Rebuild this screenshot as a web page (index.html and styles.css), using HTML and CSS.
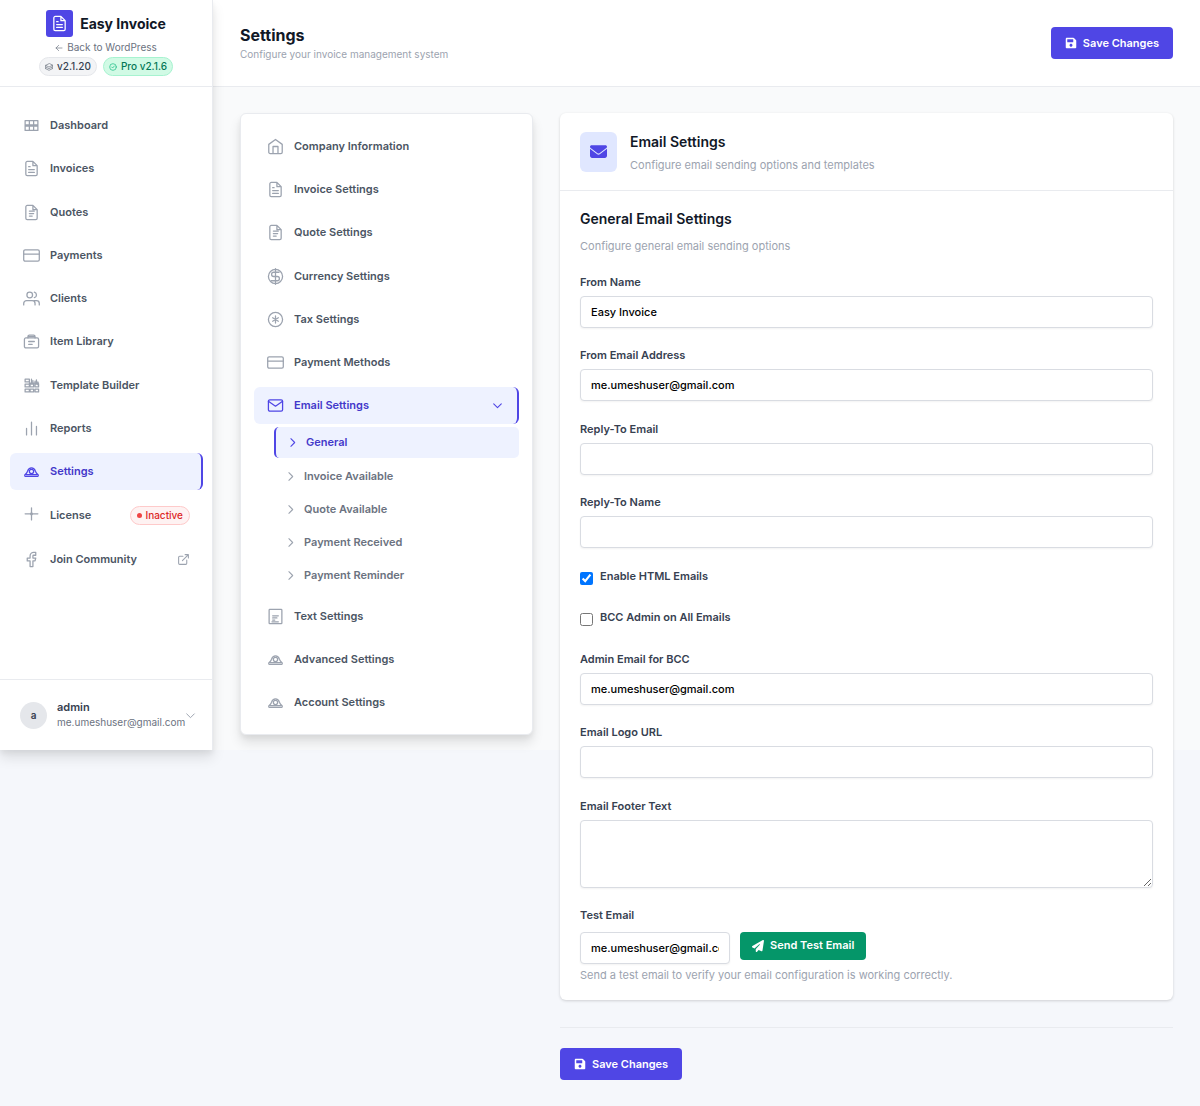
FILE: index.html
```html
<!DOCTYPE html>
<html lang="en">
<head>
  <meta charset="UTF-8" />
  <meta name="viewport" content="width=device-width, initial-scale=1" />
  <title>Settings - Easy Invoice</title>
  <link rel="stylesheet" href="styles.css">
</head>
<body>

  <!-- Shared icons -->
  <svg class="sprite" aria-hidden="true">
    <symbol id="i-file" viewBox="0 0 24 24"><path d="M14 2H6a2 2 0 0 0-2 2v16a2 2 0 0 0 2 2h12a2 2 0 0 0 2-2V8zM14 2v6h6M8 9.500h2M8 13.500h8M8 17.500h8"/></symbol>
    <symbol id="i-quote" viewBox="0 0 24 24"><path d="M14 2H6a2 2 0 0 0-2 2v16a2 2 0 0 0 2 2h12a2 2 0 0 0 2-2V8zM14 2v6h6M9 10h7M9 13.500h6M9 17h4"/></symbol>
    <symbol id="i-card" viewBox="0 0 24 24"><rect x="1" y="4" width="22" height="16" rx="2"/><path d="M1 10h22"/></symbol>
    <symbol id="i-gear" viewBox="0 0 24 24"><path d="M4 19h16a1.500 1.500 0 0 0 1.500-2c-1.500-1.500-3-3-4-5.500C16.500 8.500 14.500 7 12 7s-4.500 1.500-5.500 4.500c-1 2.500-2.500 4-4 5.500A1.500 1.500 0 0 0 4 19zM5 16.500h14"/><circle cx="12" cy="12" r="3"/></symbol>
    <symbol id="i-right" viewBox="0 0 24 24"><path d="M9 5l7 7-7 7"/></symbol>
    <symbol id="i-down" viewBox="0 0 24 24"><path d="M19 9l-7 7-7-7"/></symbol>
    <symbol id="i-save" viewBox="0 0 448 512"><path d="M433.900 129.900l-83.900-83.900A48 48 0 0 0 316.100 32H48C21.500 32 0 53.500 0 80v352c0 26.500 21.500 48 48 48h352c26.500 0 48-21.500 48-48V163.900a48 48 0 0 0-14.100-34zM224 416c-35.300 0-64-28.700-64-64s28.700-64 64-64 64 28.700 64 64-28.700 64-64 64zm96-304.500V212c0 6.600-5.400 12-12 12H76c-6.600 0-12-5.400-12-12V108c0-6.600 5.400-12 12-12h228.500c3.200 0 6.200 1.300 8.500 3.500l3.500 3.500a12 12 0 0 1 3.500 8.500z"/></symbol>
  </svg>

  <div class="shell">
    <aside class="sidebar">
      <div class="brand">
        <div class="brand-name">
          <span class="brand-logo"><svg class="icon"><use href="#i-file"/></svg></span>
          Easy Invoice
        </div>
        <a class="back-link" href="#">
          <svg class="icon tiny" viewBox="0 0 24 24"><path d="M21 12H3m8-8l-8 8 8 8"/></svg>
          Back to WordPress
        </a>
        <div class="versions">
          <span class="pill">
            <svg class="icon tiny" viewBox="0 0 24 24"><path d="M12 2L2 7l10 5 10-5zM2 12l10 5 10-5M2 17l10 5 10-5M2 7v10M22 7v10"/></svg>
            v2.1.20
          </span>
          <span class="pill pro">
            <svg class="icon tiny" viewBox="0 0 24 24"><circle cx="12" cy="12" r="10"/><path d="M8 12l3 3 5-6"/></svg>
            Pro v2.1.6
          </span>
        </div>
      </div>

      <nav class="main-nav">
        <a class="nav-item" href="#">
          <svg class="icon" viewBox="0 0 24 24"><path d="M3 5h18v14H3zM3 11h18M3 13h18M9 5v14M15 5v14"/></svg>
          Dashboard
        </a>
        <a class="nav-item" href="#"><svg class="icon"><use href="#i-file"/></svg>Invoices</a>
        <a class="nav-item" href="#"><svg class="icon"><use href="#i-quote"/></svg>Quotes</a>
        <a class="nav-item" href="#"><svg class="icon"><use href="#i-card"/></svg>Payments</a>
        <a class="nav-item" href="#">
          <svg class="icon" viewBox="0 0 24 24"><path d="M17 21v-2a4 4 0 0 0-4-4H5a4 4 0 0 0-4 4v2M23 21v-2a4 4 0 0 0-4-4h-3M16 3.130a4 4 0 0 1 0 7.750"/><circle cx="9.500" cy="7" r="4"/></svg>
          Clients
        </a>
        <a class="nav-item" href="#">
          <svg class="icon" viewBox="0 0 24 24"><rect x="2" y="7" width="20" height="14" rx="2"/><path d="M7 7V5a2 2 0 0 1 2-2h6a2 2 0 0 1 2 2v2M8 5h8M8 12h8M8 16h5"/></svg>
          Item Library
        </a>
        <a class="nav-item" href="#">
          <svg class="icon" viewBox="0 0 24 24"><path d="M3 3h6v4H3zM3 10h6v4H3zM3 17h6v4H3zM10 10h5v4h-5zM10 17h5v4h-5zM17 10h5v4h-5zM17 17h5v4h-5zM12 3v5M14 5v4M17 6v4M19 4v5M21 7v4M9 8.500h13"/></svg>
          Template Builder
        </a>
        <a class="nav-item" href="#">
          <svg class="icon" viewBox="0 0 24 24"><path d="M19 21V9M12 21V3M5 21v-9"/></svg>
          Reports
        </a>
        <a class="nav-item active" href="#"><svg class="icon"><use href="#i-gear"/></svg>Settings</a>
        <a class="nav-item tall" href="#">
          <svg class="icon raised" viewBox="0 0 24 24"><path d="M12 4v17M3 12.500h18M11 11.500h2v2h-2z"/></svg>
          License
          <span class="status">Inactive</span>
        </a>
        <a class="nav-item tall" href="#">
          <svg class="icon" viewBox="0 0 24 24"><path d="M18 2h-3a5 5 0 0 0-5 5v3H6v4h4v8h4v-8h3l1-4h-4V7a1 1 0 0 1 1-1h3z"/></svg>
          Join Community
          <svg class="icon external" viewBox="0 0 24 24"><path d="M18 13v6a2 2 0 0 1-2 2H5a2 2 0 0 1-2-2V8a2 2 0 0 1 2-2h6M15 3h6v6M10 14L21 3"/></svg>
        </a>
      </nav>

      <button class="account" type="button">
        <span class="avatar">a</span>
        <span class="account-text">
          <span class="account-name">admin</span>
          <span class="account-mail">me.umeshuser@gmail.com</span>
        </span>
        <svg class="icon account-arrow"><use href="#i-down"/></svg>
      </button>
    </aside>

    <main class="main">
      <header class="topbar">
        <div>
          <h1>Settings</h1>
          <p>Configure your invoice management system</p>
        </div>
        <button class="btn" type="submit" form="emailForm">
          <svg class="solid"><use href="#i-save"/></svg>
          Save Changes
        </button>
      </header>

      <div class="content">
        <nav class="settings-nav">
          <a class="nav-item" href="#">
            <svg class="icon" viewBox="0 0 24 24"><path d="M2.500 9L12 2l9.500 7v11a2 2 0 0 1-2 2h-15a2 2 0 0 1-2-2zM8.500 22V12h7v10"/></svg>
            Company Information
          </a>
          <a class="nav-item" href="#"><svg class="icon"><use href="#i-file"/></svg>Invoice Settings</a>
          <a class="nav-item" href="#"><svg class="icon"><use href="#i-quote"/></svg>Quote Settings</a>
          <a class="nav-item" href="#">
            <svg class="icon" viewBox="0 0 24 24"><circle cx="12" cy="12" r="10"/><path d="M12 1v22M17 6H9.500a3 3 0 0 0 0 6h5a3 3 0 0 1 0 6H6"/></svg>
            Currency Settings
          </a>
          <a class="nav-item" href="#">
            <svg class="icon" viewBox="0 0 24 24"><circle cx="12" cy="12" r="10"/><path d="M12 7v10M8 9.500l8 5M16 9.500l-8 5"/></svg>
            Tax Settings
          </a>
          <a class="nav-item" href="#"><svg class="icon"><use href="#i-card"/></svg>Payment Methods</a>
          <div class="group">
            <a class="nav-item active" href="#">
              <svg class="icon" viewBox="0 0 24 24"><rect x="2" y="4" width="20" height="16" rx="2"/><path d="M22 6l-10 7L2 6"/></svg>
              Email Settings
              <svg class="icon group-arrow"><use href="#i-down"/></svg>
            </a>
            <div class="sub-nav">
              <a class="sub-item current" href="#"><svg class="icon"><use href="#i-right"/></svg>General</a>
              <a class="sub-item" href="#"><svg class="icon"><use href="#i-right"/></svg>Invoice Available</a>
              <a class="sub-item" href="#"><svg class="icon"><use href="#i-right"/></svg>Quote Available</a>
              <a class="sub-item" href="#"><svg class="icon"><use href="#i-right"/></svg>Payment Received</a>
              <a class="sub-item" href="#"><svg class="icon"><use href="#i-right"/></svg>Payment Reminder</a>
            </div>
          </div>
          <a class="nav-item" href="#">
            <svg class="icon" viewBox="0 0 24 24"><path d="M4 2h16a1 1 0 0 1 1 1v18a1 1 0 0 1-1 1H4a1 1 0 0 1-1-1V3a1 1 0 0 1 1-1zM8 11h8M8 14h6M8 17h3M7 19.500h9"/></svg>
            Text Settings
          </a>
          <a class="nav-item" href="#"><svg class="icon"><use href="#i-gear"/></svg>Advanced Settings</a>
          <a class="nav-item" href="#"><svg class="icon"><use href="#i-gear"/></svg>Account Settings</a>
        </nav>

        <div class="panel">
          <section class="card">
            <div class="card-head">
              <span class="card-icon">
                <svg class="solid" viewBox="0 0 512 512"><path d="M48 64C21.500 64 0 85.500 0 112c0 15.100 7.100 29.300 19.200 38.400L236.800 313.600c11.400 8.500 27 8.500 38.400 0L492.800 150.400c12.100-9.100 19.200-23.300 19.200-38.400 0-26.500-21.500-48-48-48H48zM0 176v208c0 35.300 28.700 64 64 64h384c35.300 0 64-28.700 64-64V176L294.400 339.200c-22.800 17.100-54 17.100-76.800 0L0 176z"/></svg>
              </span>
              <div>
                <h2>Email Settings</h2>
                <p class="muted">Configure email sending options and templates</p>
              </div>
            </div>

            <div class="card-body">
              <h2>General Email Settings</h2>
              <p class="muted">Configure general email sending options</p>

              <form class="fields" id="emailForm">
                <div class="field">
                  <label for="fromName">From Name</label>
                  <input type="text" id="fromName" value="Easy Invoice">
                </div>
                <div class="field">
                  <label for="fromEmail">From Email Address</label>
                  <input type="email" id="fromEmail" value="me.umeshuser@gmail.com">
                </div>
                <div class="field">
                  <label for="replyEmail">Reply-To Email</label>
                  <input type="email" id="replyEmail">
                </div>
                <div class="field">
                  <label for="replyName">Reply-To Name</label>
                  <input type="text" id="replyName">
                </div>
                <div class="check">
                  <input type="checkbox" id="htmlEmails" checked>
                  <label for="htmlEmails">Enable HTML Emails</label>
                </div>
                <div class="check">
                  <input type="checkbox" id="bccAdmin">
                  <label for="bccAdmin">BCC Admin on All Emails</label>
                </div>
                <div class="field">
                  <label for="bccEmail">Admin Email for BCC</label>
                  <input type="email" id="bccEmail" value="me.umeshuser@gmail.com">
                </div>
                <div class="field">
                  <label for="logoUrl">Email Logo URL</label>
                  <input type="url" id="logoUrl">
                </div>
                <div class="field">
                  <label for="footerText">Email Footer Text</label>
                  <textarea id="footerText"></textarea>
                </div>
                <div class="field">
                  <label for="testEmail">Test Email</label>
                  <div class="test-row">
                    <input type="email" id="testEmail" value="me.umeshuser@gmail.com">
                    <button class="btn send" type="button">
                      <svg class="solid" viewBox="0 0 512 512"><path d="M498.100 5.600c10.100 7 15.400 19.100 13.500 31.200l-64 416c-1.500 9.700-7.400 18.200-16 23s-18.900 5.400-28 1.600L284 427.700l-68.500 74.100c-8.900 9.700-22.900 12.900-35.200 8.100S160 493.200 160 480v-83.600c0-4 1.500-7.800 4.200-10.800l167.600-182.800c5.800-6.300 5.600-16-.4-22s-15.700-6.400-22-.7L106 360.800l-88.300-44.200C7.100 311.300.300 300.700 0 288.900s5.900-22.800 16.100-28.700l448-256c10.700-6.100 23.900-5.500 34 1.400z"/></svg>
                      Send Test Email
                    </button>
                  </div>
                  <p class="hint">Send a test email to verify your email configuration is working correctly.</p>
                </div>
              </form>
            </div>
          </section>

          <div class="actions">
            <button class="btn" type="submit" form="emailForm">
              <svg class="solid"><use href="#i-save"/></svg>
              Save Changes
            </button>
          </div>
        </div>
      </div>
    </main>
  </div>

</body>
</html>
```
FILE: styles.css
```css
* {
  box-sizing: border-box;
}

body {
  margin: 0;
  font-family: Inter, "Liberation Sans", sans-serif;
  font-size: 11px;
  line-height: 17px;
  color: #374151;
  background: #f5f7fb;
}

h1, h2, p {
  margin: 0;
}

a {
  color: inherit;
  text-decoration: none;
}

button, input, textarea {
  font: inherit;
}

/* Icons */
.sprite {
  position: absolute;
  width: 0;
  height: 0;
}

.icon {
  width: 17px;
  height: 17px;
  flex: none;
  fill: none;
  stroke: #9ca3af;
  stroke-width: 1.8;
  stroke-linecap: round;
  stroke-linejoin: round;
}

.icon.tiny {
  width: 8px;
  height: 8px;
  stroke: currentColor;
  stroke-width: 2;
}

.solid {
  width: 12px;
  height: 12px;
  fill: currentColor;
}

.shell {
  display: flex;
  align-items: flex-start;
  min-height: 100vh;
  background: linear-gradient(#f9fafb 750px, #f5f7fb 750px);
}

/* Sidebar */
.sidebar {
  position: relative;
  display: flex;
  flex-direction: column;
  flex: none;
  width: 213px;
  min-height: 750px;
  background: #fff;
  border-right: 1px solid #e9ebef;
  box-shadow: 0 8px 12px rgba(0, 0, 0, 0.1), 0 3px 5px rgba(0, 0, 0, 0.05);
}

.brand {
  display: flex;
  flex-direction: column;
  align-items: center;
  height: 87px;
  padding-top: 10px;
  border-bottom: 1px solid #e9ebef;
}

.brand-name {
  display: flex;
  align-items: center;
  gap: 7px;
  font-size: 14px;
  font-weight: 700;
  color: #111827;
}

.brand-logo {
  display: grid;
  place-items: center;
  width: 27px;
  height: 27px;
  border-radius: 3px;
  background: #4f46e5;
}

.brand-logo .icon {
  stroke: #fff;
}

.back-link {
  display: flex;
  align-items: center;
  gap: 4px;
  margin-top: 2px;
  font-size: 10px;
  color: #6b7280;
}

.versions {
  display: flex;
  gap: 6px;
  margin-top: 1px;
}

.pill {
  display: flex;
  align-items: center;
  gap: 4px;
  height: 19px;
  padding: 0 5px;
  border: 1px solid #e5e7eb;
  border-radius: 10px;
  background: #f3f4f6;
  font-size: 10px;
  font-weight: 500;
}

.pill .icon {
  stroke: #6b7280;
}

.pill.pro {
  color: #047857;
  background: #d1fae5;
  border-color: #a7f3d0;
}

.pill.pro .icon {
  stroke: #10b981;
}

.main-nav {
  display: flex;
  flex-direction: column;
  justify-content: space-between;
  min-height: 472px;
  margin: 20px 9px 0 10px;
}

.nav-item {
  display: flex;
  align-items: center;
  gap: 10px;
  height: 37px;
  padding: 0 13px;
  border-radius: 6px;
  font-weight: 600;
  color: #4b5563;
}

.nav-item.tall {
  height: 38px;
}

.nav-item:hover {
  background: #f9fafb;
}

.nav-item.active {
  color: #4338ca;
  background: #eef2ff;
  border-right: 2px solid #4f46e5;
}

.nav-item.active .icon {
  stroke: #4f46e5;
}

.raised {
  margin-bottom: 4px;
}

.status {
  display: flex;
  align-items: center;
  gap: 3px;
  height: 19px;
  margin-left: auto;
  padding: 0 6px;
  border: 1px solid #fecaca;
  border-radius: 10px;
  background: #fef2f2;
  font-size: 10px;
  font-weight: 500;
  color: #dc2626;
}

.status::before {
  content: "";
  width: 5px;
  height: 5px;
  border-radius: 50%;
  background: #ef4444;
}

.icon.external {
  width: 13px;
  height: 13px;
  margin-left: auto;
  stroke-width: 2;
}

.account {
  display: flex;
  align-items: center;
  gap: 10px;
  height: 71px;
  margin-top: auto;
  padding: 0 15px 0 20px;
  border: 0;
  border-top: 1px solid #e9ebef;
  background: none;
  text-align: left;
  cursor: pointer;
}

.avatar {
  display: grid;
  place-items: center;
  width: 27px;
  height: 27px;
  flex: none;
  border-radius: 50%;
  background: #e5e7eb;
  font-size: 10px;
  font-weight: 600;
  color: #374151;
}

.account-text {
  display: flex;
  flex-direction: column;
  flex: 1;
  min-width: 0;
  line-height: 15px;
}

.account-name {
  font-weight: 600;
  color: #374151;
}

.account-mail {
  font-size: 10px;
  color: #6b7280;
}

.account-arrow {
  width: 13px;
  height: 13px;
  margin-left: -10px;
}

/* Main column */
.main {
  flex: 1;
  min-width: 0;
}

.topbar {
  display: flex;
  align-items: center;
  justify-content: space-between;
  height: 87px;
  padding: 0 27px;
  background: #fff;
  border-bottom: 1px solid #e9ebef;
}

.topbar h1 {
  font-size: 16px;
  line-height: 23px;
  font-weight: 700;
  color: #111827;
}

.topbar p {
  font-size: 10px;
  line-height: 15px;
  color: #9ca3af;
}

.btn {
  display: inline-flex;
  align-items: center;
  gap: 6px;
  height: 32px;
  padding: 0 14px;
  border: 0;
  border-radius: 4px;
  background: #4f46e5;
  color: #fff;
  font-weight: 600;
  cursor: pointer;
}

.btn:hover {
  background: #4338ca;
}

.content {
  display: grid;
  grid-template-columns: 293px minmax(0, 1fr);
  align-items: start;
  gap: 27px;
  padding: 26px 27px;
}

/* Settings menu */
.settings-nav {
  display: flex;
  flex-direction: column;
  justify-content: space-between;
  min-height: 622px;
  padding: 14px 13px 13px;
  background: #fff;
  border: 1px solid #e9ebef;
  border-radius: 6px;
  box-shadow: 0 8px 12px rgba(0, 0, 0, 0.1), 0 3px 5px rgba(0, 0, 0, 0.05);
}

.group-arrow {
  width: 13px;
  height: 13px;
  margin-left: auto;
  stroke-width: 2;
}

.sub-nav {
  display: flex;
  flex-direction: column;
  justify-content: space-between;
  min-height: 164px;
  margin: 3px 0 0 20px;
}

.sub-item {
  display: flex;
  align-items: center;
  gap: 7px;
  height: 31px;
  padding: 0 10px;
  border-radius: 5px;
  font-weight: 600;
  color: #6b7280;
}

.sub-item .icon {
  width: 13px;
  height: 13px;
  stroke-width: 2;
}

.sub-item.current {
  color: #4338ca;
  background: #eef2ff;
  border-left: 2px solid #4f46e5;
}

.sub-item.current .icon {
  stroke: #4f46e5;
}

/* Form card */
.card {
  background: #fff;
  border-radius: 6px;
  box-shadow: 0 1px 3px rgba(0, 0, 0, 0.16);
}

.card h2 {
  font-size: 14px;
  line-height: 23px;
  font-weight: 600;
  color: #111827;
}

.muted, .hint {
  color: #9ca3af;
}

.card-head {
  display: flex;
  align-items: center;
  gap: 13px;
  height: 78px;
  padding: 0 20px;
  border-bottom: 1px solid #e9ebef;
}

.card-head .muted {
  margin-top: 4px;
}

.card-icon {
  display: grid;
  place-items: center;
  width: 37px;
  height: 40px;
  border-radius: 6px;
  background: #e0e7ff;
  color: #4f46e5;
}

.card-icon .solid {
  width: 17px;
  height: 17px;
}

.card-body {
  padding: 16px 20px;
}

.card-body > .muted {
  margin-top: 8px;
}

.fields {
  display: flex;
  flex-direction: column;
  justify-content: space-between;
  min-height: 710px;
  margin-top: 19px;
}

.field label,
.check label {
  display: block;
  font-weight: 600;
}

.field input,
.field textarea {
  display: block;
  width: 100%;
  height: 32px;
  margin-top: 5px;
  padding: 0 10px;
  border: 1px solid #d9dce2;
  border-radius: 4px;
  background: #fff;
  color: #000;
  font-weight: 500;
  box-shadow: 0 1px 2px rgba(0, 0, 0, 0.05);
}

.field textarea {
  height: 68px;
  padding: 7px 10px;
  resize: vertical;
}

.check {
  display: flex;
  align-items: flex-start;
  gap: 7px;
  height: 22px;
}

.check input {
  width: 13px;
  height: 13px;
  margin: 4px 0 0;
}

.test-row {
  display: flex;
  align-items: flex-start;
  gap: 10px;
  margin: 8px 0 3px;
}

.test-row input {
  width: 150px;
  margin: 0;
}

.btn.send {
  height: 28px;
  padding: 0 12px;
  background: #059669;
}

.btn.send:hover {
  background: #047857;
}

.actions {
  margin-top: 27px;
  padding-top: 20px;
  border-top: 1px solid #e9ebef;
}
```
